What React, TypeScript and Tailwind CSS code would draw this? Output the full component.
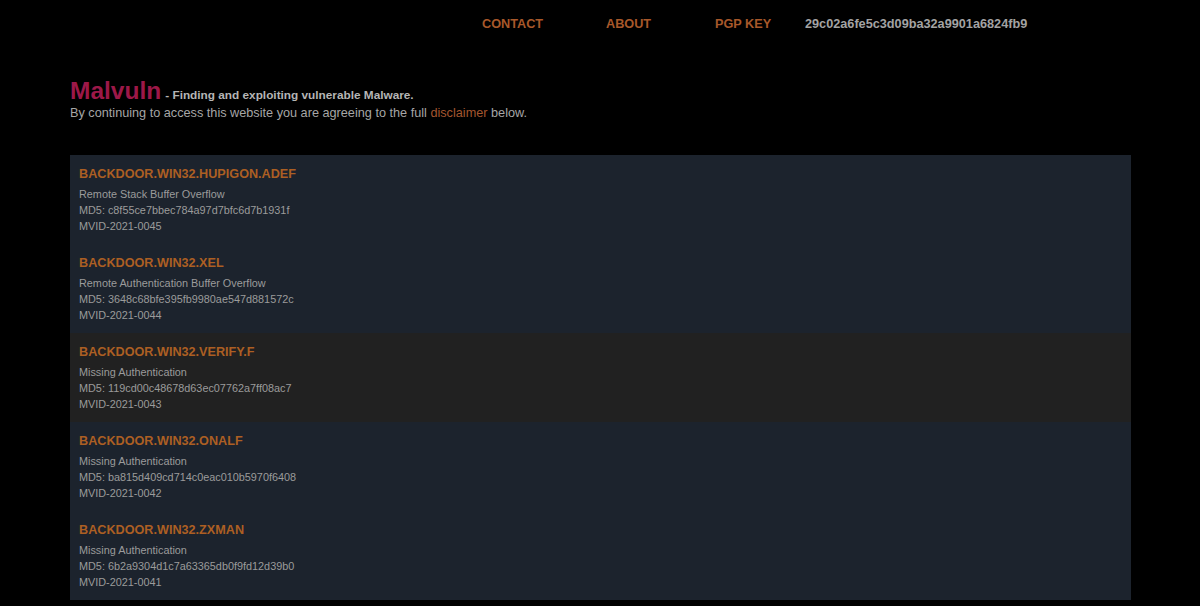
const entries = [
  { name: "BACKDOOR.WIN32.HUPIGON.ADEF", vuln: "Remote Stack Buffer Overflow", md5: "c8f55ce7bbec784a97d7bfc6d7b1931f", id: "MVID-2021-0045" },
  { name: "BACKDOOR.WIN32.XEL", vuln: "Remote Authentication Buffer Overflow", md5: "3648c68bfe395fb9980ae547d881572c", id: "MVID-2021-0044" },
  { name: "BACKDOOR.WIN32.VERIFY.F", vuln: "Missing Authentication", md5: "119cd00c48678d63ec07762a7ff08ac7", id: "MVID-2021-0043", active: true },
  { name: "BACKDOOR.WIN32.ONALF", vuln: "Missing Authentication", md5: "ba815d409cd714c0eac010b5970f6408", id: "MVID-2021-0042" },
  { name: "BACKDOOR.WIN32.ZXMAN", vuln: "Missing Authentication", md5: "6b2a9304d1c7a63365db0f9fd12d39b0", id: "MVID-2021-0041" },
];

export default function App() {
  return (
    <div className="min-h-[606px] w-full bg-black font-['Liberation_Sans',Arial,sans-serif] overflow-hidden">
      {/* NAV */}
      <nav className="flex items-center h-[48px] pt-[2px] pl-[482px] text-[12.7px] font-bold">
        <a className="text-[#a8582a] w-[124px]">CONTACT</a>
        <a className="text-[#a8582a] w-[109px]">ABOUT</a>
        <a className="text-[#a8582a] w-[90px]">PGP KEY</a>
        <span className="text-[#a3a3a3]">29c02a6fe5c3d09ba32a9901a6824fb9</span>
      </nav>

      {/* HEADER */}
      <div className="px-[70px] pt-[30px]">
        <div className="flex items-baseline gap-[4px] h-[26px]">
          <span className="text-[24.5px] font-bold text-[#9c1848] leading-[26px]">Malvuln</span>
          <span className="text-[11.8px] font-bold text-[#b5b5b5]">- Finding and exploiting vulnerable Malware.</span>
        </div>
        <p className="text-[12.7px] leading-[16px] text-[#a6a6a6] mt-[1px]">
          By continuing to access this website you are agreeing to the full{" "}
          <a className="text-[#a4562f]">disclaimer</a> below.
        </p>
      </div>

      {/* LIST */}
      <div className="mx-[70px] mt-[34px] w-[1061px] bg-[#1c232d]">
        {entries.map((e) => (
          <div
            key={e.id}
            className={`px-[9px] pt-[11px] pb-[9px] h-[89px] ${e.active ? "bg-[#212121]" : "bg-[#1c232d]"}`}
          >
            <div className="text-[12.65px] leading-[16px] font-bold text-[#ac5f23]">{e.name}</div>
            <div className="mt-[4px] text-[10.85px] leading-[16px] text-[#9b9b9b]">
              <div>{e.vuln}</div>
              <div>MD5: {e.md5}</div>
              <div>{e.id}</div>
            </div>
          </div>
        ))}
      </div>
    </div>
  );
}
